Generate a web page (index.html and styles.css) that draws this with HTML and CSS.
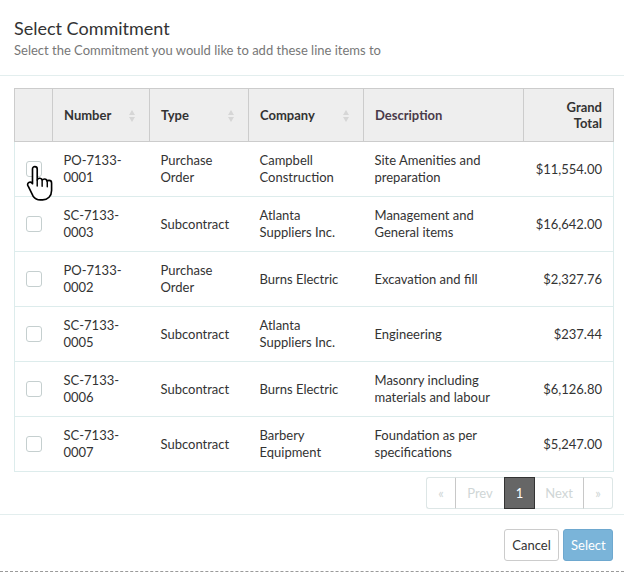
FILE: index.html
```html
<!DOCTYPE html>
<html>
<head>
<meta charset="utf-8">
<link rel="stylesheet" href="styles.css">
</head>
<body>
<div class="modal">
  <div class="modal-header">
    <h1 class="title">Select Commitment</h1>
    <p class="subtitle">Select the Commitment you would like to add these line items to</p>
  </div>
  <div class="modal-body">
    <table class="grid">
      <colgroup>
        <col class="c-check"><col class="c-num"><col class="c-type"><col class="c-comp"><col class="c-desc"><col class="c-total">
      </colgroup>
      <thead>
        <tr>
          <th></th>
          <th class="sortable">Number<span class="sort"></span></th>
          <th class="sortable">Type<span class="sort"></span></th>
          <th class="sortable">Company<span class="sort"></span></th>
          <th class="desc-h">Description</th>
          <th class="right">Grand<br>Total</th>
        </tr>
      </thead>
      <tbody>
        <tr>
          <td class="chk"><span class="box"></span>
            <svg class="hand" width="29" height="39" viewBox="0 0 28 38"><path d="M8.5 2.5c1.3 0 2.3 1 2.3 2.3v10.7c.4-1 1.3-1.6 2.3-1.6 1.3 0 2.3.9 2.5 2.1.4-.8 1.3-1.4 2.3-1.4 1.3 0 2.4 1 2.5 2.3.4-.6 1.1-1 1.9-1 1.3 0 2.5 1.1 2.5 2.5v7.5c0 5.3-3.7 9.1-8.7 9.1h-2.4c-3 0-5.200-1.3-6.9-3.6L2 21.6c-.9-1.1-.7-2.6.4-3.4 1.1-.8 2.5-.6 3.4.4l.4.6V4.8c0-1.3 1-2.3 2.3-2.3z" fill="#fff" stroke="#000" stroke-width="1.6" stroke-linejoin="round"/><path d="M10.8 15.5v6M15.6 16.8v5M20.6 17.8v4.4" stroke="#000" stroke-width="1.4" stroke-linecap="round"/></svg>
          </td>
          <td>PO-7133-<br>0001</td><td>Purchase<br>Order</td><td>Campbell<br>Construction</td><td>Site Amenities and<br>preparation</td><td class="right">$11,554.00</td>
        </tr>
        <tr>
          <td class="chk"><span class="box"></span></td>
          <td>SC-7133-<br>0003</td><td>Subcontract</td><td>Atlanta<br>Suppliers Inc.</td><td>Management and<br>General items</td><td class="right">$16,642.00</td>
        </tr>
        <tr>
          <td class="chk"><span class="box"></span></td>
          <td>PO-7133-<br>0002</td><td>Purchase<br>Order</td><td>Burns Electric</td><td>Excavation and fill</td><td class="right">$2,327.76</td>
        </tr>
        <tr>
          <td class="chk"><span class="box"></span></td>
          <td>SC-7133-<br>0005</td><td>Subcontract</td><td>Atlanta<br>Suppliers Inc.</td><td>Engineering</td><td class="right">$237.44</td>
        </tr>
        <tr>
          <td class="chk"><span class="box"></span></td>
          <td>SC-7133-<br>0006</td><td>Subcontract</td><td>Burns Electric</td><td>Masonry including<br>materials and labour</td><td class="right">$6,126.80</td>
        </tr>
        <tr>
          <td class="chk"><span class="box"></span></td>
          <td>SC-7133-<br>0007</td><td>Subcontract</td><td>Barbery<br>Equipment</td><td>Foundation as per<br>specifications</td><td class="right">$5,247.00</td>
        </tr>
      </tbody>
    </table>
    <div class="pager">
      <span class="pg first">«</span><span class="pg prev">Prev</span><span class="pg active">1</span><span class="pg next">Next</span><span class="pg last">»</span>
    </div>
  </div>
  <div class="modal-footer">
    <button class="btn btn-default">Cancel</button>
    <button class="btn btn-primary">Select</button>
  </div>
</div>
</body>
</html>
```
FILE: styles.css
```css
html, body {
  margin: 0;
  padding: 0;
  background: #fff;
}
body {
  font-family: Lato, "Open Sans", sans-serif;
  font-size: 13px;
  color: #333;
  width: 624px;
  height: 572px;
  overflow: hidden;
}
.modal {
  width: 624px;
  height: 572px;
  box-sizing: border-box;
  border-bottom: 1px dashed #9a9a9a;
  display: flex;
  flex-direction: column;
}
.modal-header {
  padding: 17px 14px 0;
  height: 58px;
  border-bottom: 1px solid #e3eeee;
}
.title {
  margin: 0;
  font-size: 18px;
  font-weight: 400;
  line-height: 22px;
  color: #333;
}
.subtitle {
  margin: 3px 0 0;
  font-size: 13px;
  line-height: 16px;
  color: #777;
}
.modal-body {
  padding: 12px 11px 0 14px;
  height: 439px;
  flex: none;
  box-sizing: border-box;
  border-bottom: 1px solid #e3eeee;
}
.grid {
  width: 599px;
  table-layout: fixed;
  border-collapse: collapse;
  line-height: 17px;
}
.c-check { width: 38px; }
.c-num { width: 97px; }
.c-type { width: 99px; }
.c-comp { width: 115px; }
.c-desc { width: 160px; }
.c-total { width: 90px; }
.grid th {
  background: #eeeeee;
  border: 1px solid #cccccc;
  height: 52px;
  padding: 0 11px;
  text-align: left;
  font-weight: 700;
  line-height: 16px;
  color: #333;
  position: relative;
}
.grid th.desc-h { color: #4a3a4a; }
.grid th.right { text-align: right; }
.sort {
  position: absolute;
  right: 13px;
  top: 21px;
  width: 7px;
  height: 12px;
}
.sort::before, .sort::after {
  content: "";
  position: absolute;
  left: 0;
  border-left: 3.5px solid transparent;
  border-right: 3.5px solid transparent;
}
.sort::before { top: 0; border-bottom: 5px solid #d6d6d6; }
.sort::after { bottom: 0; border-top: 5px solid #d6d6d6; }
.grid td {
  height: 54px;
  padding: 0 11px;
  border-top: 1px solid #ddecec;
  border-bottom: 1px solid #ddecec;
  vertical-align: middle;
  color: #333;
}
.grid td:first-child { border-left: 1px solid #ddecec; }
.grid td:last-child { border-right: 1px solid #ddecec; }
.grid td.right { text-align: right; padding-right: 11px; }
.grid td.chk {
  padding: 0 0 0 11px;
  position: relative;
}
.box {
  display: block;
  width: 14px;
  height: 14px;
  border: 1px solid #c5cfcf;
  border-radius: 3px;
  background: #fff;
}
.hand {
  position: absolute;
  left: 11px;
  top: 22px;
}
.pager {
  display: flex;
  justify-content: flex-end;
  margin-top: 5px;
  margin-right: 0;
}
.pg {
  height: 30px;
  line-height: 30px;
  border: 1px solid #dde6e6;
  border-left: none;
  color: #cfd6d6;
  text-align: center;
  font-size: 13px;
}
.pg.first { border-left: 1px solid #dde6e6; border-radius: 3px 0 0 3px; width: 28px; border-right-color: #c8c8c8; }
.pg.prev { width: 48px; border-right: none; }
.pg.active {
  width: 29px;
  background: #666;
  color: #fff;
  border: 1px solid #333;
  height: 30px;
}
.pg.next { width: 48px; border-right-color: #c8c8c8; }
.pg.last { width: 28px; border-radius: 0 3px 3px 0; }
.modal-footer {
  display: flex;
  justify-content: flex-end;
  gap: 4px;
  padding: 14px 11px 0 0;
}
.btn {
  font-family: Lato, "Open Sans", sans-serif;
  font-size: 13px;
  height: 32px;
  border-radius: 3px;
  padding: 0 7px;
  margin: 0;
}
.btn-default {
  background: #fff;
  border: 1px solid #cccccc;
  color: #333;
  width: 55px;
}
.btn-primary {
  background: #7ab4d9;
  border: 1px solid #6ea8cf;
  color: #fff;
  width: 50px;
}
```
